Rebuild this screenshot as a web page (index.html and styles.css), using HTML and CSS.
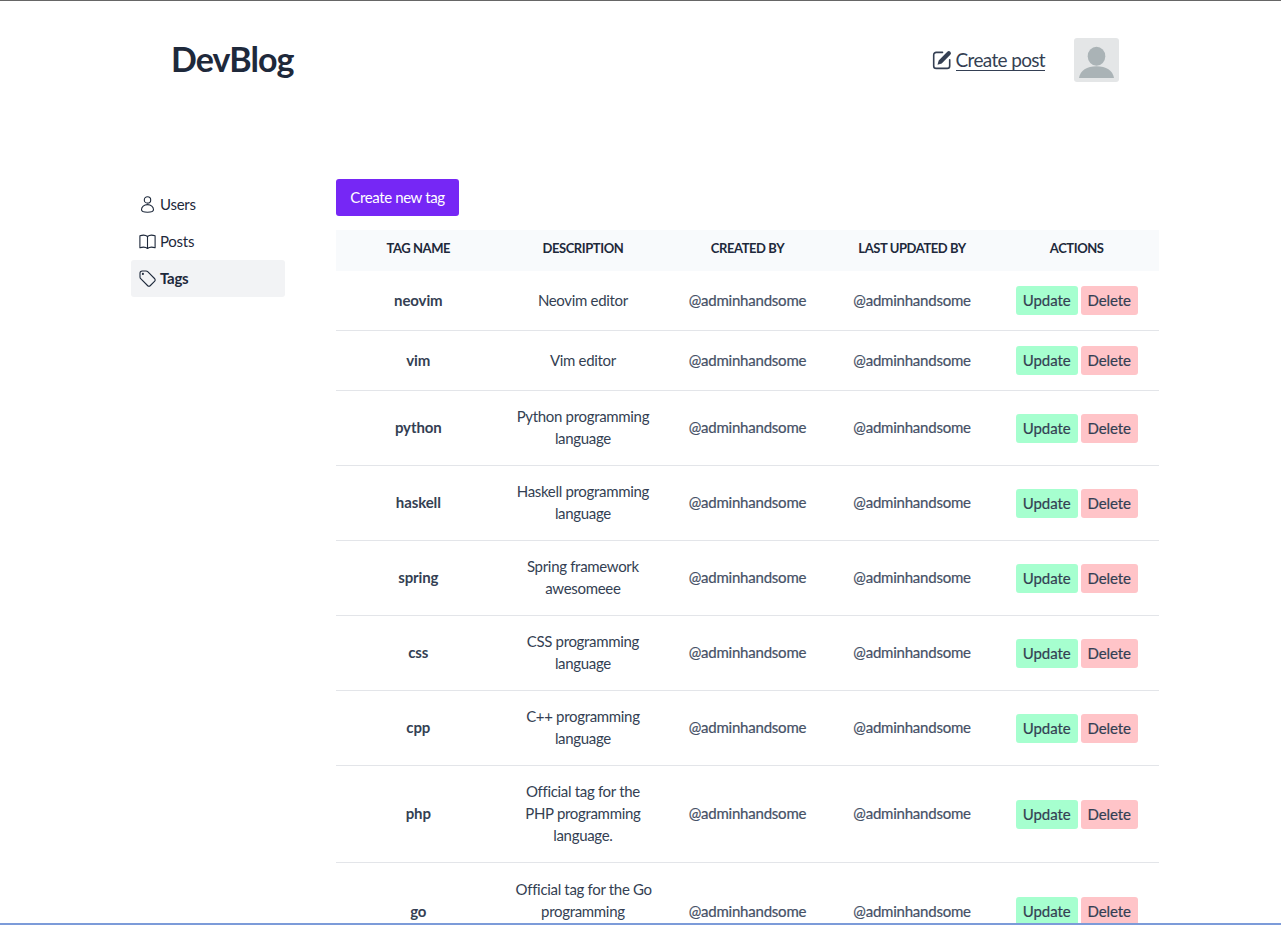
FILE: index.html
```html
<!DOCTYPE html>
<html lang="en">
<head>
<meta charset="utf-8">
<title>DevBlog</title>
<link rel="stylesheet" href="styles.css">
</head>
<body>
<div class="page">
<header class="header">
<a class="logo">DevBlog</a>
<div class="header-actions">
<a class="create-post">
<svg class="edit-icon" viewBox="0 0 20 20" fill="none" stroke="currentColor"><path d="M10.5 2.4H4.2a2.5 2.5 0 0 0-2.5 2.5v11a2.5 2.5 0 0 0 2.5 2.5h11a2.5 2.5 0 0 0 2.5-2.5V9.8" stroke-width="1.6" stroke-linecap="round"/><path d="M5.5 14.8l1.200-4.400 8.600-8.700a2.100 2.100 0 0 1 3 3l-8.600 8.700z" fill="currentColor" stroke="none"/></svg>
<span class="create-text">Create post</span></a>
<svg class="avatar" viewBox="0 0 45 44"><rect width="45" height="44" rx="3" fill="#e4e6e7"/><ellipse cx="22.5" cy="18.3" rx="8.8" ry="9.5" fill="#aab3b6"/><path d="M5 40c1-7.500 8-11.800 17.500-11.800S39 32.500 40 40z" fill="#aab3b6"/></svg>
</div>
</header>
<div class="layout">
<nav class="sidebar">
<a class="nav-item"><svg class="nav-icon" viewBox="0 0 17 17"><circle cx="8.500" cy="3.900" r="3.200"/><path d="M8.500 8.600c-3.500 0-6 2.300-6 5.200 0 1.800 2.500 2.500 6 2.500s6-.7 6-2.500c0-2.900-2.500-5.200-6-5.200z"/></svg><span class="nav-label">Users</span></a>
<a class="nav-item"><svg class="nav-icon" viewBox="0 0 17 17"><path d="M8.500 3.500C6.800 2 3.800 1.800.9 2.800v12c2.900-1 5.900-.8 7.600.7 1.700-1.500 4.700-1.700 7.600-.7v-12c-2.900-1-5.900-.8-7.600.7zm0 0v12"/></svg><span class="nav-label">Posts</span></a>
<a class="nav-item active"><svg class="nav-icon" viewBox="0 0 17 17"><path d="M1 3.200V7c0 .7.300 1.300.7 1.700l6.800 6.800c.9.900 2 .9 2.900 0l4.100-4.100c.9-.9.900-2 0-2.900L8.700 1.700C8.300 1.300 7.700 1 7 1H3.200C2 1 1 2 1 3.200z"/><circle cx="3.900" cy="3.900" r=".5"/></svg><span class="nav-label">Tags</span></a>
</nav>
<main class="content">
<button class="new-tag">Create new tag</button>
<table class="tags">
<thead><tr><th>TAG NAME</th><th>DESCRIPTION</th><th>CREATED BY</th><th>LAST UPDATED BY</th><th>ACTIONS</th></tr></thead>
<tbody id="tag-rows"></tbody>
</table>
</main>
</div>
<div class="bottom-line"></div>
</div>
<script src="tags.js"></script>
</body>
</html>
```
FILE: styles.css
```css
* { box-sizing: border-box; }
body { margin: 0; background: #fff; color: #343f53; font: 15px/22px Lato, "Open Sans", sans-serif; }
.page { position: relative; height: 925px; overflow: hidden; border-top: 1px solid #666; }
.header { display: flex; justify-content: space-between; align-items: center; height: 117px; padding: 0 162px 0 171px; }
.logo { padding-bottom: 2px; font-size: 34px; line-height: 44px; font-weight: 700; color: #1e293b; letter-spacing: -.9px; }
.header-actions { display: flex; align-items: center; gap: 29px; }
.create-post { display: flex; align-items: center; gap: 4px; font-size: 19px; }
.create-text { line-height: 21px; border-bottom: 1px solid #343f53; letter-spacing: -.65px; white-space: nowrap; }
.edit-icon { width: 20px; height: 20px; }
.avatar { width: 45px; height: 44px; }
.layout { display: flex; gap: 51px; padding: 61px 122px 0 131px; }
.sidebar { width: 154px; padding-top: 7px; }
.nav-item { display: flex; align-items: center; gap: 4px; height: 37px; padding: 0 8px; color: #1e293b; border-radius: 3px; }
.nav-icon { width: 17px; height: 17px; fill: none; stroke: currentColor; stroke-width: 1.1; stroke-linejoin: round; }
.nav-label { padding-bottom: 2px; letter-spacing: -.25px; }
.active { background: #f2f3f5; font-weight: 700; }
.content { flex: 1; }
.new-tag { display: block; width: 123px; height: 37px; padding: 0 0 2px; border: 0; border-radius: 3px; background: #7627f5; color: #fff; font: 15px/22px Lato, sans-serif; letter-spacing: -.38px; white-space: nowrap; }
.tags { width: 823px; margin-top: 14px; table-layout: fixed; border-collapse: separate; border-spacing: 0; text-align: center; }
.tags th { height: 41px; padding: 0 0 5px; background: #f8fafc; color: #1e293b; font-size: 13px; line-height: 18px; font-weight: 700; letter-spacing: -.42px; white-space: nowrap; }
.tags td { height: 60px; padding: 14px 15px 16px; border-bottom: 1px solid #e3e5e9; white-space: nowrap; }
.tags .name { font-weight: 700; letter-spacing: -.1px; }
.tags .description { letter-spacing: -.32px; }
.tags .author { padding: 0 0 2px; color: #465166; letter-spacing: -.22px; -webkit-text-stroke: .2px currentColor; }
.tags .actions { padding: 0; -webkit-text-stroke: .2px currentColor; letter-spacing: -.1px; }
.tags .last td { height: 98px; }
.tags .last .description { padding-top: 15px; vertical-align: top; }
.buttons { display: flex; justify-content: center; gap: 3px; }
.button { height: 29px; line-height: 29px; border-radius: 3px; }
.update { width: 62px; background: #a6ffcf; }
.delete { width: 57px; background: #ffc4c8; }
.bottom-line { position: absolute; left: 0; right: 0; bottom: 0; height: 2px; background: #7c9bd9; }
```
FILE: tags.js
```js
const tags = [
  ["neovim", "Neovim editor"],
  ["vim", "Vim editor"],
  ["python", "Python programming<br>language"],
  ["haskell", "Haskell programming<br>language"],
  ["spring", "Spring framework<br>awesomeee"],
  ["css", "CSS programming<br>language"],
  ["cpp", "C++ programming<br>language"],
  ["php", "Official tag for the<br>PHP programming<br>language."],
  ["go", "Official tag for the Go<br>programming"]
];
document.getElementById("tag-rows").innerHTML = tags.map(([name, description], i) => `
<tr class="${i === tags.length - 1 ? "last" : "row"}"><td class="name">${name}</td><td class="description">${description}</td>
<td class="author">@adminhandsome</td><td class="author">@adminhandsome</td>
<td class="actions"><div class="buttons"><span class="button update">Update</span><span class="button delete">Delete</span></div></td></tr>`).join("");
```
